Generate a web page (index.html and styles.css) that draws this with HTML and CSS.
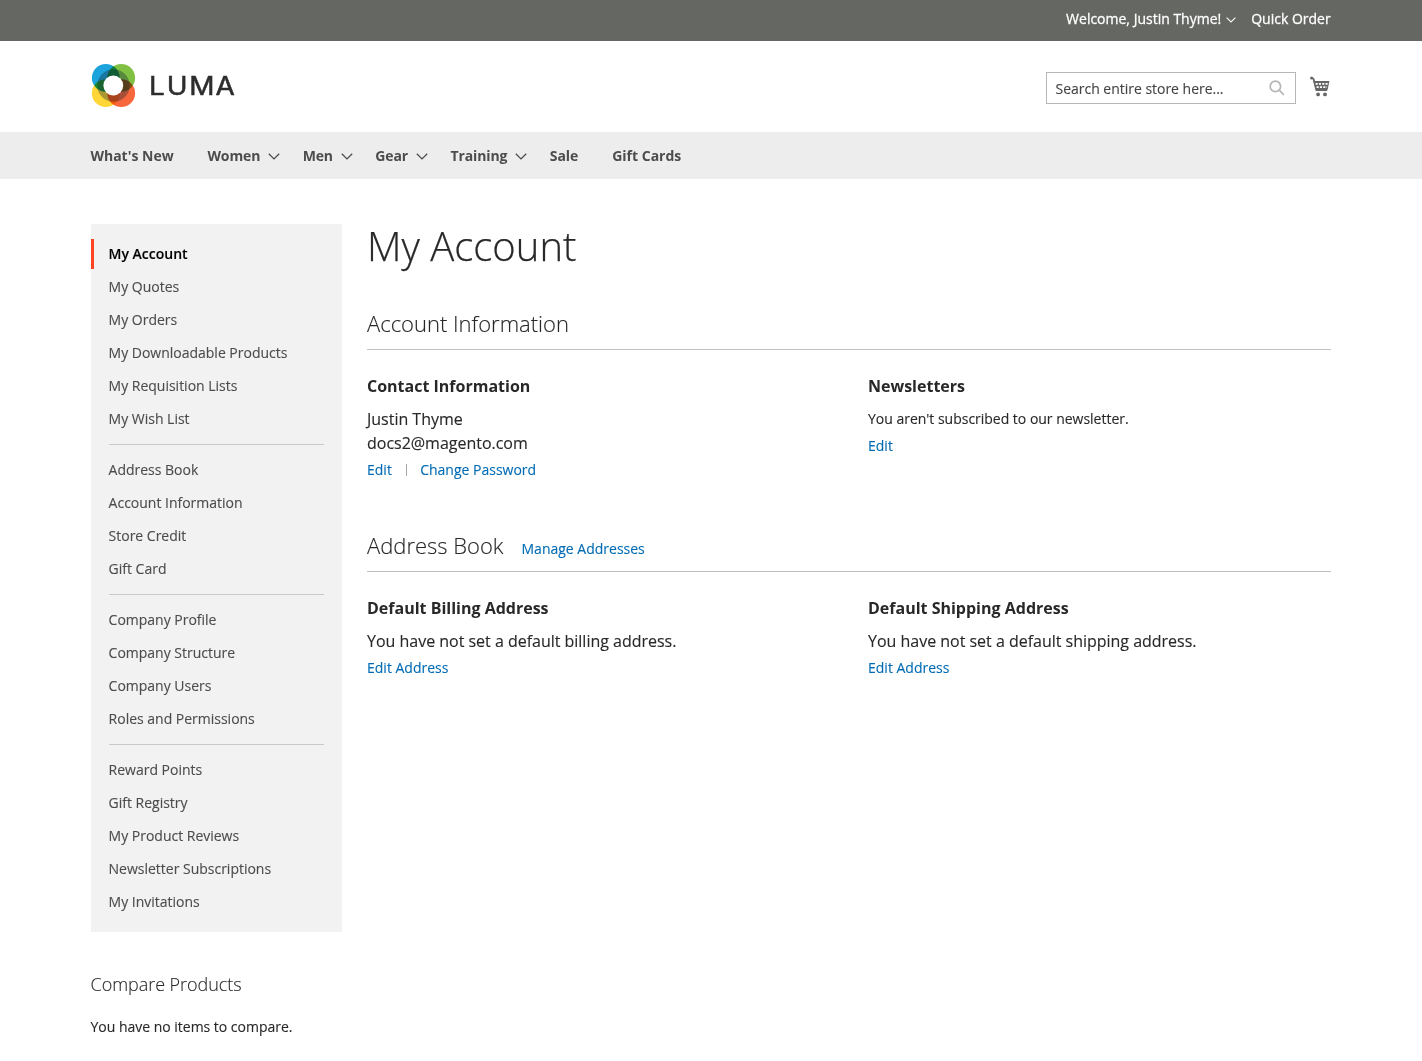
FILE: index.html
```html
<!DOCTYPE html>
<html lang="en">
<head>
<meta charset="utf-8">
<title>My Account</title>
<link rel="stylesheet" href="styles.css">
</head>
<body>
<div class="topbar">
  <div class="container topbar-inner">
    <span class="welcome">Welcome, Justin Thyme!</span>
    <svg class="chev-small" width="10" height="6" viewBox="0 0 10 6"><path d="M.6.7 5 4.9 9.4.7"/></svg>
    <a class="quick">Quick Order</a>
  </div>
</div>
<header class="container header">
  <svg class="logo" width="148" height="46" viewBox="90 62 148 46">
    <g class="petals">
      <circle cx="105.8" cy="77.8" r="13.9" fill="#1ca3dc"/>
      <circle cx="121.2" cy="77.8" r="13.9" fill="#80c042"/>
      <circle cx="105.8" cy="93.2" r="13.9" fill="#ffd637"/>
      <circle cx="121.2" cy="93.2" r="13.9" fill="#f7673b"/>
    </g>
    <circle class="ring" cx="113.5" cy="85.5" r="13"/>
    <circle cx="113.3" cy="85.5" r="9.9" fill="#fff"/>
    <text class="brand" transform="scale(1.1 1)" y="94.6" x="135.4 151.6 172 195.9">LUMA</text>
  </svg>
  <div class="header-tools">
    <div class="search">
      <span>Search entire store here...</span>
      <svg width="16" height="16" viewBox="0 0 16 16"><circle cx="6.4" cy="6.4" r="5.2"/><path d="m10.2 10.2 4.6 4.6"/></svg>
    </div>
    <svg class="cart" width="20" height="21" viewBox="0 0 20 21">
      <path class="cart-line" d="M1.3 1.8 3.5 2.8 6.4 14H17.2"/>
      <circle cx="1.6" cy="2" r="1.5"/>
      <path d="M3.4 5.1H19.4L17.7 13.4H5.8Z"/>
      <path class="cart-grid" d="M5.6 7.8H17.9M6.6 11.1H17"/>
      <circle cx="8.1" cy="18.4" r="1.9"/><circle cx="15" cy="18.4" r="1.9"/>
    </svg>
  </div>
</header>
<nav class="nav">
  <div class="container nav-inner">
    <a class="plain">What's New</a>
    <a class="drop">Women<svg width="12" height="7" viewBox="0 0 12 7"><path d="M.8.7 6 5.9 11.2.7"/></svg></a>
    <a class="drop">Men<svg width="12" height="7" viewBox="0 0 12 7"><path d="M.8.7 6 5.9 11.2.7"/></svg></a>
    <a class="drop">Gear<svg width="12" height="7" viewBox="0 0 12 7"><path d="M.8.7 6 5.9 11.2.7"/></svg></a>
    <a class="drop">Training<svg width="12" height="7" viewBox="0 0 12 7"><path d="M.8.7 6 5.9 11.2.7"/></svg></a>
    <a class="plain">Sale</a>
    <a class="plain">Gift Cards</a>
  </div>
</nav>
<div class="container columns">
  <aside class="sidebar">
    <div class="account-nav">
      <ul>
        <li class="current">My Account</li><li>My Quotes</li><li>My Orders</li><li>My Downloadable Products</li><li>My Requisition Lists</li><li>My Wish List</li>
      </ul>
      <ul>
        <li>Address Book</li><li>Account Information</li><li>Store Credit</li><li>Gift Card</li>
      </ul>
      <ul>
        <li>Company Profile</li><li>Company Structure</li><li>Company Users</li><li>Roles and Permissions</li>
      </ul>
      <ul>
        <li>Reward Points</li><li>Gift Registry</li><li>My Product Reviews</li><li>Newsletter Subscriptions</li><li>My Invitations</li>
      </ul>
    </div>
    <h3 class="compare-title">Compare Products</h3>
    <p class="compare-empty">You have no items to compare.</p>
  </aside>
  <main class="main">
    <h1>My Account</h1>
    <section class="block block-info">
      <div class="block-title"><h2>Account Information</h2></div>
      <div class="boxes">
        <div class="box">
          <h4>Contact Information</h4>
          <p>Justin Thyme<br>docs2@magento.com</p>
          <div class="actions"><a>Edit</a><i class="sep"></i><a>Change Password</a></div>
        </div>
        <div class="box">
          <h4>Newsletters</h4>
          <p class="small">You aren't subscribed to our newsletter.</p>
          <div class="actions"><a>Edit</a></div>
        </div>
      </div>
    </section>
    <section class="block">
      <div class="block-title"><h2>Address Book</h2><a>Manage Addresses</a></div>
      <div class="boxes">
        <div class="box">
          <h4>Default Billing Address</h4>
          <p>You have not set a default billing address.</p>
          <div class="actions"><a>Edit Address</a></div>
        </div>
        <div class="box">
          <h4>Default Shipping Address</h4>
          <p>You have not set a default shipping address.</p>
          <div class="actions"><a>Edit Address</a></div>
        </div>
      </div>
    </section>
  </main>
</div>
</body>
</html>
```
FILE: styles.css
```css
* { box-sizing: border-box; }
html, body { overflow: hidden; }
body { margin: 0; height: 1061px; background: #fff; color: #282828; font: 14px/20px "Open Sans", "Noto Sans", sans-serif; -webkit-text-stroke: .12px; }
h1, h2, h3, h4, p, ul { margin: 0; padding: 0; font-weight: 400; }
ul { list-style: none; }
svg { display: block; flex: none; }
.container { width: 1240px; margin: 0 auto; }

.topbar { height: 41px; background: #656762; color: #fff; -webkit-text-stroke: .27px; }
.topbar-inner { display: flex; justify-content: flex-end; align-items: center; padding: 9px .3px 0 0; }
.chev-small { margin: 1px 15px 0 5px; fill: none; stroke: #fff; stroke-width: 1.1; }

.header { height: 91px; display: flex; justify-content: space-between; }
.logo { margin: 21px 0 0 -1px; }
.petals { isolation: isolate; }
.petals circle { mix-blend-mode: multiply; }
.ring { fill: none; stroke: #123; stroke-opacity: .35; stroke-width: 6.4; }
.brand { font: 400 25.4px Inter, sans-serif; fill: #2d2d2d; stroke: #2d2d2d; stroke-width: .5px; }
.header-tools { display: flex; align-items: flex-start; padding-top: 31px; }
.search { width: 250px; height: 32px; border: 1px solid #b7b7b7; padding: 0 10px 0 8.5px; display: flex; justify-content: space-between; align-items: center; color: #444; }
.search span { margin-top: 2px; letter-spacing: -.02px; }
.search svg { fill: none; stroke: #b5b5b5; stroke-width: 1.7; }
.cart { margin: 4px 1px 0 14px; fill: #666; }
.cart-line { fill: none; stroke: #666; stroke-width: 1.8; }
.cart-grid { fill: none; stroke: #fff; stroke-width: 1.7; stroke-dasharray: 2.1 1.2; }

.nav { height: 47px; background: #ededed; color: #4c4c4c; font-weight: 700; -webkit-text-stroke: 0; }
.nav-inner { display: flex; align-items: center; height: 47px; }
.nav a { display: flex; align-items: center; position: relative; left: -.6px; }
.plain { margin-right: 33.8px; }
.drop { margin-right: 22.2px; letter-spacing: -.12px; }
.drop svg { margin: 1px 0 0 8.2px; fill: none; stroke: #4c4c4c; stroke-width: 1.3; }

.columns { display: flex; padding-top: 45px; }
.sidebar { width: 251px; margin-right: 25px; }
.account-nav { height: 708px; background: #f2f2f2; padding: 15px 0; color: #4c4c4c; }
.account-nav li { height: 30px; line-height: 20px; padding: 5px 18px 5px 17.6px; margin-bottom: 3px; letter-spacing: -.01px; }
.account-nav .current { border-left: 3px solid #ff4422; padding-left: 14.6px; color: #000; font-weight: 600; }
.account-nav ul + ul::before { content: ""; display: block; height: 1px; margin: 0 18px 10px; background: #c9c9c9; }
.account-nav ul + ul { padding-top: 7px; }
.compare-title { margin: 40px 0 0 -.5px; font-size: 18px; line-height: 24px; font-weight: 300; letter-spacing: -.04px; }
.compare-empty { margin: 21px 0 0 -.5px; letter-spacing: -.015px; }

.main { flex: 1; }
h1 { font-size: 40px; line-height: 44px; font-weight: 300; -webkit-text-stroke: .25px; }
.block-info { height: 222px; margin-top: 41px; }
.block-title { display: flex; align-items: baseline; height: 41px; border-bottom: 1px solid #c1c1c1; }
h2 { font-size: 22px; line-height: 28px; font-weight: 300; margin-right: 18px; }
a { color: inherit; }
.main a { color: #006bb4; }
.boxes { display: grid; grid-template-columns: 501px 1fr; padding-top: 24px; }
h4 { font-size: 16px; line-height: 24px; font-weight: 700; margin-bottom: 9px; -webkit-text-stroke: 0; }
.box p { font-size: 16px; line-height: 24px; letter-spacing: -.015px; }
.box .small { font-size: 14px; }
.actions { display: flex; align-items: center; margin-top: 5px; }
.sep { width: 1px; height: 12px; margin: 0 13.3px 0 14px; background: #a6a6a6; }
```
